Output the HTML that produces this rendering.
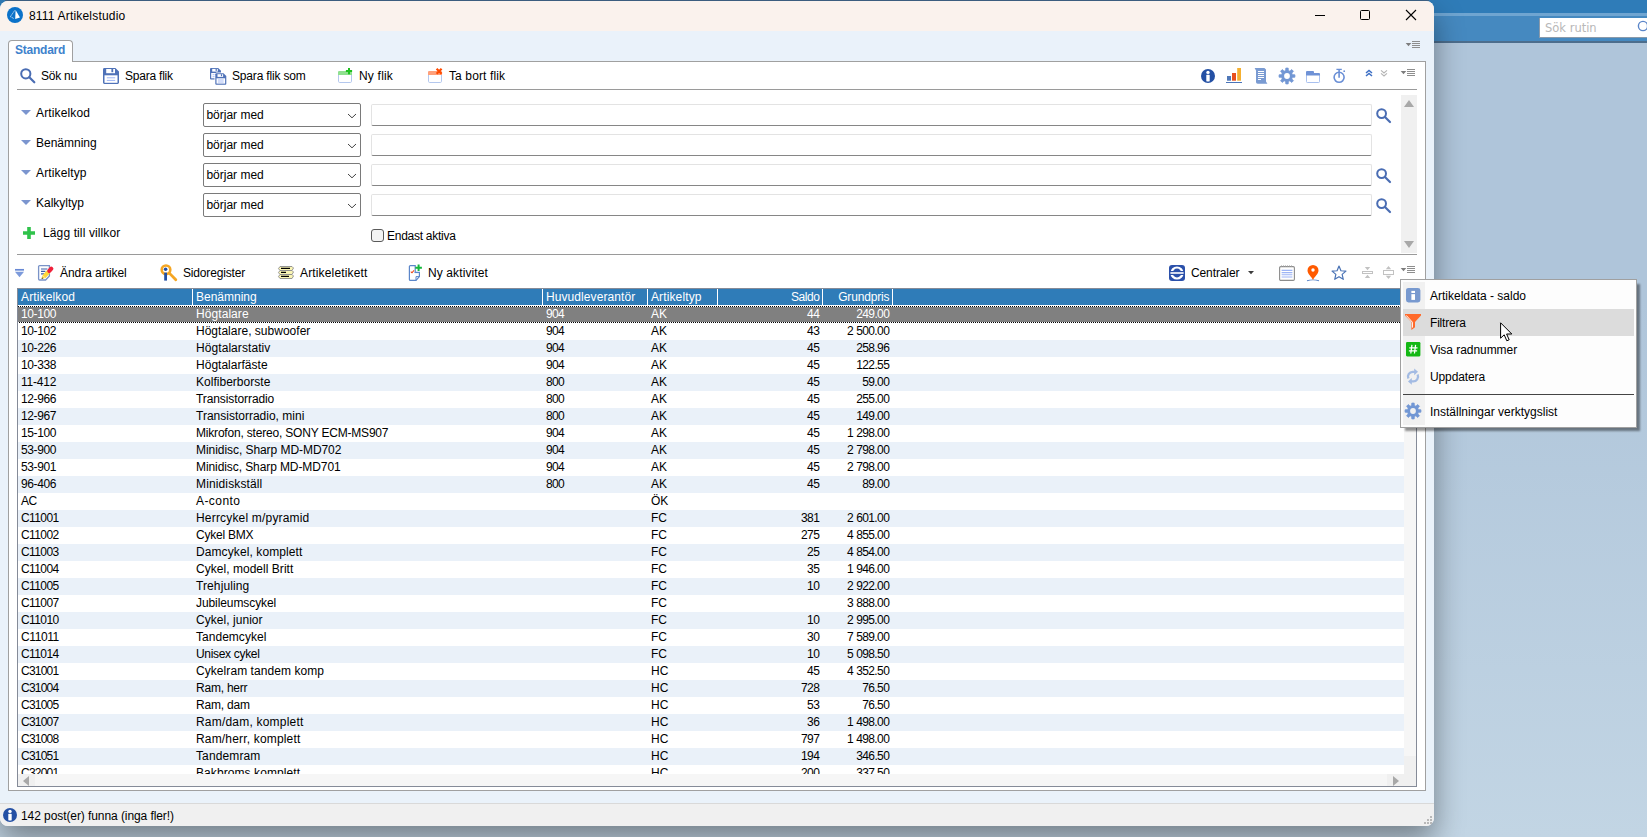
<!DOCTYPE html>
<html lang="sv"><head><meta charset="utf-8"><title>8111 Artikelstudio</title>
<style>
*{box-sizing:border-box}
html,body{margin:0;padding:0}
body{width:1647px;height:837px;overflow:hidden;position:relative;font-family:"Liberation Sans",sans-serif;font-size:12px;color:#000;
 background:linear-gradient(#afc5da 0,#afc5da 300px,#c2d5e4 837px)}
.abs{position:absolute}
svg{position:absolute;overflow:visible}
#topband{left:0;top:0;width:1647px;height:43px;background:linear-gradient(#2f7cb8 0,#2f7cb8 13px,#6fa5d1 13px,#6fa5d1 16px,#4589c0 16px,#4589c0 41px,#4c6d8c 41px,#4c6d8c 43px)}
#search{left:1539px;top:18px;width:120px;height:20px;background:#fff;border-left:1px solid #8a9aaa;border-bottom:1px solid #8a9aaa;color:#b8b8b8;font-family:"DejaVu Sans","Liberation Sans",sans-serif;font-size:11.5px;line-height:20px;padding-left:5px}
#shadow{left:0;top:0;width:1460px;height:837px;background:linear-gradient(90deg,rgba(60,80,100,.35) 1434px,rgba(60,80,100,0) 1458px)}
#shadowb{left:0;top:826px;width:1647px;height:11px;background:linear-gradient(rgba(70,85,100,.45),rgba(70,85,100,.25))}
#win{left:0;top:1px;width:1434px;height:825px;background:#eaf2fa;border-radius:8px;overflow:hidden;box-shadow:0 14px 30px rgba(0,0,0,.40)}
#title{left:0;top:0;width:1434px;height:30px;background:#faf2ed}
#title .t{left:29px;top:7px;font-size:12px;line-height:16px}
#tab{left:8px;top:39px;width:65px;height:22px;background:#fff;border:1px solid #a0a0a0;border-bottom:none;border-radius:4px 4px 0 0;color:#3e82cc;font-weight:bold;font-size:12px;line-height:19px;padding-left:6px;z-index:2;letter-spacing:-.24px}
#panel{left:8px;top:60px;width:1418px;height:730px;background:#fff;border:1px solid #a0a0a0}
.hl{background:#9a9a9a;height:1px}
.tb{font-size:12px;line-height:16px;white-space:nowrap}
.lbl{font-size:12px;line-height:16px;white-space:nowrap}
.combo{width:158px;height:24px;border:1px solid #7a7a7a;background:#fff;border-radius:2px;font-size:12px;line-height:22px;padding-left:2.400px}
.inp{left:371px;width:1001px;height:22px;background:#fff;border:1px solid #e3e3e3;border-bottom:1px solid #868686;border-radius:2px}
#grid{left:17px;top:288px;width:1400px;height:499px;border:1px solid #858b98;background:#fff;overflow:hidden}
#gh{left:0;top:0;width:1398px;height:16px;background:#2f7cb8;color:#fff}
#gh span{position:absolute;top:0;line-height:16px;font-size:12px}
#gh i{position:absolute;top:0;width:1px;height:16px;background:#fff}
.r{position:absolute;left:0;width:1386px;height:17px;line-height:17px;font-size:12px;white-space:nowrap}
.r.alt{background:#eaf1f9}
.r.sel{color:#fff;background:linear-gradient(#808080,#808080) 0 1px/100% 15px no-repeat,repeating-linear-gradient(90deg,#000 0,#000 1px,#fff 1px,#fff 2px) 0 0/100% 1px no-repeat,repeating-linear-gradient(90deg,#fff 0,#fff 1px,#000 1px,#000 2px) 0 16px/100% 1px no-repeat}
.r span{position:absolute;top:0}
.c1{left:3px}.c2{left:178px}.c3{left:528px;letter-spacing:-.62px}.c4{left:633px}.c5{right:584.800px;letter-spacing:-.62px}.c6{right:514.800px;letter-spacing:-.62px;word-spacing:.5px}
#status{left:0;top:803px;width:1434px;height:23px;background:#f0f0f0;border-top:1px solid #d9d9d9;border-radius:0 0 8px 8px}
#menu{left:1400px;top:279px;width:237px;height:149px;background:#fdfdfd;border:1px solid #a0a0a0;box-shadow:4px 4px 2px -1px rgba(0,0,0,.42)}
#menu .gut{left:2px;top:2px;width:22px;height:143px;background:#f1f1f1}
#menu .hov{left:2px;top:29px;width:231px;height:27px;background:#dcdcdc}
#menu .mi{left:29px;font-size:12px;line-height:16px;white-space:nowrap}
#menu .sep{left:2px;top:114px;width:231px;height:1px;background:#444}
</style></head><body>
<div id="topband" class="abs"></div>
<div id="search" class="abs">Sök rutin</div>
<div class="abs" style="left:5px;top:0;width:1424px;height:1px;background:#3f6488"></div>
<div id="win" class="abs">
 <div id="title" class="abs"><div class="t abs" style="letter-spacing:.19px">8111 Artikelstudio</div></div>
 <div id="tab" class="abs">Standard</div>
 <div id="panel" class="abs"></div>
</div>
<!-- content positioned in page coords -->
<div id="content" class="abs" style="left:0;top:0;width:1434px;height:837px">
 <div class="abs tb" style="left:41px;top:68px;letter-spacing:-0.25px">Sök nu</div>
 <div class="abs tb" style="left:125px;top:68px;letter-spacing:-0.22px">Spara flik</div>
 <div class="abs tb" style="left:232px;top:68px;letter-spacing:-0.18px">Spara flik som</div>
 <div class="abs tb" style="left:359px;top:68px;letter-spacing:0.2px">Ny flik</div>
 <div class="abs tb" style="left:449px;top:68px;letter-spacing:0.12px">Ta bort flik</div>
 <div class="abs hl" style="left:17px;top:89px;width:1400px"></div>

 <div class="abs lbl" style="left:36px;top:105px;letter-spacing:0.13px">Artikelkod</div>
 <div class="abs lbl" style="left:36px;top:135px">Benämning</div>
 <div class="abs lbl" style="left:36px;top:165px;letter-spacing:0.13px">Artikeltyp</div>
 <div class="abs lbl" style="left:36px;top:195px">Kalkyltyp</div>
 <div class="abs lbl" style="left:43px;top:225px;letter-spacing:0.12px">Lägg till villkor</div>
 <div class="abs combo" style="left:203px;top:103px">börjar med</div>
 <div class="abs combo" style="left:203px;top:133px">börjar med</div>
 <div class="abs combo" style="left:203px;top:163px">börjar med</div>
 <div class="abs combo" style="left:203px;top:193px">börjar med</div>
 <div class="abs inp" style="top:104px"></div>
 <div class="abs inp" style="top:134px"></div>
 <div class="abs inp" style="top:164px"></div>
 <div class="abs inp" style="top:194px"></div>
 <div class="abs" style="left:371px;top:229px;width:13px;height:13px;border:1px solid #5a5a5a;border-radius:3px;background:#f4f4f4"></div>
 <div class="abs lbl" style="left:387px;top:228px;letter-spacing:-0.26px">Endast aktiva</div>
 <div class="abs" style="left:1401px;top:95px;width:16px;height:158px;background:#f0f0f0"></div>
 <div class="abs hl" style="left:17px;top:254px;width:1400px"></div>

 <div class="abs tb" style="left:60px;top:265px;letter-spacing:-0.05px">Ändra artikel</div>
 <div class="abs tb" style="left:183px;top:265px;letter-spacing:-0.17px">Sidoregister</div>
 <div class="abs tb" style="left:300px;top:265px;letter-spacing:0.15px">Artikeletikett</div>
 <div class="abs tb" style="left:428px;top:265px;letter-spacing:0.11px">Ny aktivitet</div>
 <div class="abs tb" style="left:1191px;top:265px;letter-spacing:-0.11px">Centraler</div>

 <div id="grid" class="abs">
  <div id="gh" class="abs"><span style="left:3px;letter-spacing:.13px">Artikelkod</span><i style="left:174px"></i><span style="left:178px">Benämning</span><i style="left:524px"></i><span style="left:528px;letter-spacing:.08px">Huvudleverantör</span><i style="left:629px"></i><span style="left:633px;letter-spacing:.12px">Artikeltyp</span><i style="left:699px"></i><span style="right:596.600px;letter-spacing:-.45px">Saldo</span><i style="left:804px"></i><span style="right:526.600px;letter-spacing:-.16px">Grundpris</span><i style="left:874px"></i></div>
  <div class="abs" style="left:0;top:0;width:1398px;height:485px;overflow:hidden">
<div class="r sel" style="top:17px"><span class="c1" style="letter-spacing:-0.372px">10-100</span><span class="c2" style="letter-spacing:0.071px">Högtalare</span><span class="c3">904</span><span class="c4">AK</span><span class="c5">44</span><span class="c6">249.00</span></div>
<div class="r" style="top:34px"><span class="c1" style="letter-spacing:-0.372px">10-102</span><span class="c2" style="letter-spacing:0.013px">Högtalare, subwoofer</span><span class="c3">904</span><span class="c4">AK</span><span class="c5">43</span><span class="c6">2 500.00</span></div>
<div class="r alt" style="top:51px"><span class="c1" style="letter-spacing:-0.372px">10-226</span><span class="c2" style="letter-spacing:0.072px">Högtalarstativ</span><span class="c3">904</span><span class="c4">AK</span><span class="c5">45</span><span class="c6">258.96</span></div>
<div class="r" style="top:68px"><span class="c1" style="letter-spacing:-0.372px">10-338</span><span class="c2" style="letter-spacing:0.02px">Högtalarfäste</span><span class="c3">904</span><span class="c4">AK</span><span class="c5">45</span><span class="c6">122.55</span></div>
<div class="r alt" style="top:85px"><span class="c1" style="letter-spacing:-0.194px">11-412</span><span class="c2" style="letter-spacing:0.021px">Kolfiberborste</span><span class="c3">800</span><span class="c4">AK</span><span class="c5">45</span><span class="c6">59.00</span></div>
<div class="r" style="top:102px"><span class="c1" style="letter-spacing:-0.372px">12-966</span><span class="c2" style="letter-spacing:-0.092px">Transistorradio</span><span class="c3">800</span><span class="c4">AK</span><span class="c5">45</span><span class="c6">255.00</span></div>
<div class="r alt" style="top:119px"><span class="c1" style="letter-spacing:-0.372px">12-967</span><span class="c2" style="letter-spacing:0.002px">Transistorradio, mini</span><span class="c3">800</span><span class="c4">AK</span><span class="c5">45</span><span class="c6">149.00</span></div>
<div class="r" style="top:136px"><span class="c1" style="letter-spacing:-0.372px">15-100</span><span class="c2" style="letter-spacing:-0.193px">Mikrofon, stereo, SONY ECM-MS907</span><span class="c3">904</span><span class="c4">AK</span><span class="c5">45</span><span class="c6">1 298.00</span></div>
<div class="r alt" style="top:153px"><span class="c1" style="letter-spacing:-0.372px">53-900</span><span class="c2" style="letter-spacing:-0.057px">Minidisc, Sharp MD-MD702</span><span class="c3">904</span><span class="c4">AK</span><span class="c5">45</span><span class="c6">2 798.00</span></div>
<div class="r" style="top:170px"><span class="c1" style="letter-spacing:-0.372px">53-901</span><span class="c2" style="letter-spacing:-0.088px">Minidisc, Sharp MD-MD701</span><span class="c3">904</span><span class="c4">AK</span><span class="c5">45</span><span class="c6">2 798.00</span></div>
<div class="r alt" style="top:187px"><span class="c1" style="letter-spacing:-0.372px">96-406</span><span class="c2" style="letter-spacing:0.133px">Minidiskställ</span><span class="c3">800</span><span class="c4">AK</span><span class="c5">45</span><span class="c6">89.00</span></div>
<div class="r" style="top:204px"><span class="c1" style="letter-spacing:-0.572px">AC</span><span class="c2" style="letter-spacing:0.426px">A-conto</span><span class="c3"></span><span class="c4">ÖK</span><span class="c5"></span><span class="c6"></span></div>
<div class="r alt" style="top:221px"><span class="c1" style="letter-spacing:-0.588px">C11001</span><span class="c2" style="letter-spacing:0.182px">Herrcykel m/pyramid</span><span class="c3"></span><span class="c4">FC</span><span class="c5">381</span><span class="c6">2 601.00</span></div>
<div class="r" style="top:238px"><span class="c1" style="letter-spacing:-0.588px">C11002</span><span class="c2" style="letter-spacing:-0.218px">Cykel BMX</span><span class="c3"></span><span class="c4">FC</span><span class="c5">275</span><span class="c6">4 855.00</span></div>
<div class="r alt" style="top:255px"><span class="c1" style="letter-spacing:-0.588px">C11003</span><span class="c2" style="letter-spacing:0.095px">Damcykel, komplett</span><span class="c3"></span><span class="c4">FC</span><span class="c5">25</span><span class="c6">4 854.00</span></div>
<div class="r" style="top:272px"><span class="c1" style="letter-spacing:-0.588px">C11004</span><span class="c2" style="letter-spacing:0.034px">Cykel, modell Britt</span><span class="c3"></span><span class="c4">FC</span><span class="c5">35</span><span class="c6">1 946.00</span></div>
<div class="r alt" style="top:289px"><span class="c1" style="letter-spacing:-0.588px">C11005</span><span class="c2" style="letter-spacing:0.104px">Trehjuling</span><span class="c3"></span><span class="c4">FC</span><span class="c5">10</span><span class="c6">2 922.00</span></div>
<div class="r" style="top:306px"><span class="c1" style="letter-spacing:-0.588px">C11007</span><span class="c2" style="letter-spacing:-0.083px">Jubileumscykel</span><span class="c3"></span><span class="c4">FC</span><span class="c5"></span><span class="c6">3 888.00</span></div>
<div class="r alt" style="top:323px"><span class="c1" style="letter-spacing:-0.588px">C11010</span><span class="c2" style="letter-spacing:0.047px">Cykel, junior</span><span class="c3"></span><span class="c4">FC</span><span class="c5">10</span><span class="c6">2 995.00</span></div>
<div class="r" style="top:340px"><span class="c1" style="letter-spacing:-0.41px">C11011</span><span class="c2" style="letter-spacing:0.027px">Tandemcykel</span><span class="c3"></span><span class="c4">FC</span><span class="c5">30</span><span class="c6">7 589.00</span></div>
<div class="r alt" style="top:357px"><span class="c1" style="letter-spacing:-0.588px">C11014</span><span class="c2" style="letter-spacing:-0.314px">Unisex cykel</span><span class="c3"></span><span class="c4">FC</span><span class="c5">10</span><span class="c6">5 098.50</span></div>
<div class="r" style="top:374px"><span class="c1" style="letter-spacing:-0.766px">C31001</span><span class="c2" style="letter-spacing:0.068px">Cykelram tandem komp</span><span class="c3"></span><span class="c4">HC</span><span class="c5">45</span><span class="c6">4 352.50</span></div>
<div class="r alt" style="top:391px"><span class="c1" style="letter-spacing:-0.766px">C31004</span><span class="c2" style="letter-spacing:-0.218px">Ram, herr</span><span class="c3"></span><span class="c4">HC</span><span class="c5">728</span><span class="c6">76.50</span></div>
<div class="r" style="top:408px"><span class="c1" style="letter-spacing:-0.766px">C31005</span><span class="c2" style="letter-spacing:-0.206px">Ram, dam</span><span class="c3"></span><span class="c4">HC</span><span class="c5">53</span><span class="c6">76.50</span></div>
<div class="r alt" style="top:425px"><span class="c1" style="letter-spacing:-0.766px">C31007</span><span class="c2" style="letter-spacing:0.205px">Ram/dam, komplett</span><span class="c3"></span><span class="c4">HC</span><span class="c5">36</span><span class="c6">1 498.00</span></div>
<div class="r" style="top:442px"><span class="c1" style="letter-spacing:-0.766px">C31008</span><span class="c2" style="letter-spacing:0.173px">Ram/herr, komplett</span><span class="c3"></span><span class="c4">HC</span><span class="c5">797</span><span class="c6">1 498.00</span></div>
<div class="r alt" style="top:459px"><span class="c1" style="letter-spacing:-0.766px">C31051</span><span class="c2" style="letter-spacing:0.118px">Tandemram</span><span class="c3"></span><span class="c4">HC</span><span class="c5">194</span><span class="c6">346.50</span></div>
<div class="r" style="top:476px"><span class="c1" style="letter-spacing:-0.766px">C32001</span><span class="c2" style="letter-spacing:0.082px">Bakbroms komplett</span><span class="c3"></span><span class="c4">HC</span><span class="c5">200</span><span class="c6">337.50</span></div>
  </div>
  <div class="abs" style="left:1386px;top:17px;width:12px;height:468px;background:#f6f6f6"></div><div class="abs" style="left:1386px;top:467px;width:12px;height:18px;background:#f0f0f0"></div>
  <div class="abs" style="left:0;top:485px;width:1398px;height:12px;background:#f6f6f6"></div><div class="abs" style="left:1369px;top:485px;width:17px;height:12px;background:#f0f0f0"></div><div class="abs" style="left:0;top:485px;width:17px;height:12px;background:#f0f0f0"></div><div class="abs" style="left:1386px;top:485px;width:12px;height:12px;background:#f0f0f0"></div>
 </div>

 <div id="status" class="abs"><div class="abs lbl" style="left:21px;top:4px;letter-spacing:-0.08px">142 post(er) funna (inga fler!)</div></div>
</div>


<!-- ICONS -->
<svg style="left:7px;top:7px" width="16" height="16" viewBox="0 0 16 16"><circle cx="8" cy="8" r="8" fill="#0b72c9"/><path d="M8.6 3 L13 10.6 L8.2 12 Z" fill="#fff"/><path d="M7.6 3.6 L3.4 9.6 L6.6 11.4" fill="none" stroke="#fff" stroke-width="1" stroke-dasharray="1.2 1.2"/></svg>
<!-- window controls -->
<svg style="left:1314px;top:9px" width="12" height="12" viewBox="0 0 12 12"><path d="M1 6.5H11" stroke="#000" stroke-width="1"/></svg>
<svg style="left:1359px;top:9px" width="12" height="12" viewBox="0 0 12 12"><rect x="1.5" y="1.5" width="9" height="9" rx="1" fill="none" stroke="#000" stroke-width="1"/></svg>
<svg style="left:1405px;top:9px" width="12" height="12" viewBox="0 0 12 12"><path d="M1 1L11 11M11 1L1 11" stroke="#000" stroke-width="1.1"/></svg>
<!-- menu glyphs -->
<svg class="mg" style="left:1406px;top:41px" width="14" height="8" viewBox="0 0 14 8"><path d="M-.3 2h5.600L2.500 5.200z" fill="#7d7d7d"/><path d="M6 .5h8M6 2.500h8M6 4.500h8M6 6.500h8" stroke="#8e8e8e" stroke-width="1"/></svg>
<svg class="mg" style="left:1401px;top:69px" width="14" height="8" viewBox="0 0 14 8"><path d="M-.3 2h5.600L2.500 5.200z" fill="#7d7d7d"/><path d="M6 .5h8M6 2.500h8M6 4.500h8M6 6.500h8" stroke="#8e8e8e" stroke-width="1"/></svg>
<svg class="mg" style="left:1401px;top:266px" width="14" height="8" viewBox="0 0 14 8"><path d="M-.3 2h5.600L2.500 5.200z" fill="#7d7d7d"/><path d="M6 .5h8M6 2.500h8M6 4.500h8M6 6.500h8" stroke="#8e8e8e" stroke-width="1"/></svg>
<!-- toolbar 1 left -->
<svg style="left:19px;top:67px" width="17" height="17" viewBox="0 0 17 17"><circle cx="6.8" cy="6.8" r="4.6" fill="none" stroke="#4a6db3" stroke-width="2"/><path d="M10.3 10.3L15.3 15.3" stroke="#4a6db3" stroke-width="2.2" stroke-linecap="round"/></svg>
<svg style="left:103px;top:68px" width="16" height="16" viewBox="0 0 16 16"><path d="M1.400 0H12.400L16 3.600V14.600a1.400 1.400 0 0 1-1.400 1.400H1.400A1.400 1.400 0 0 1 0 14.600V1.400A1.400 1.400 0 0 1 1.400 0z" fill="#4f72b8"/><rect x="3.200" y="1" width="8.800" height="4.200" fill="#fff"/><rect x="8.400" y="1" width="1.800" height="3.200" fill="#4f72b8"/><rect x="1.500" y="7.300" width="13" height="7.500" fill="#fff"/><path d="M3.800 9.800h8.400M3.800 12.400h8.400" stroke="#9db4f5" stroke-width="1"/></svg>
<svg style="left:210px;top:68px" width="17" height="17" viewBox="0 0 17 17"><g><path d="M1 0H8.200L11 2.800V10.400a1 1 0 0 1-1 1H1a1 1 0 0 1-1-1V1a1 1 0 0 1 1-1z" fill="#4f72b8"/><rect x="2.200" y=".9" width="5.600" height="2.700" fill="#fff"/><rect x="5.600" y=".9" width="1.200" height="2" fill="#4f72b8"/><rect x="1.200" y="5" width="8.600" height="5.300" fill="#fff"/><path d="M2.600 6.700h5.800M2.600 8.700h5.800" stroke="#9db4f5" stroke-width=".9"/></g><g transform="translate(5.300 5.300)"><path d="M1 -.8H8.600L11.800 2.400V12.200H-.8V1z" fill="#fff"/><path d="M1 0H8.200L11 2.800V10.400a1 1 0 0 1-1 1H1a1 1 0 0 1-1-1V1a1 1 0 0 1 1-1z" fill="#4f72b8"/><rect x="2.200" y=".9" width="5.600" height="2.700" fill="#fff"/><rect x="5.600" y=".9" width="1.200" height="2" fill="#4f72b8"/><rect x="1.200" y="5" width="8.600" height="5.300" fill="#fff"/><path d="M2.600 6.700h5.800M2.600 8.700h5.800" stroke="#9db4f5" stroke-width=".9"/></g></svg>
<svg style="left:338px;top:68px" width="15" height="16" viewBox="0 0 15 16"><rect x=".5" y="3.500" width="13" height="11" rx="1.200" fill="#fff" stroke="#b4c8ee" stroke-width="1"/><path d="M0 7V4.200a1.200 1.200 0 0 1 1.200-1.200H12.800a1.200 1.200 0 0 1 1.200 1.200V7z" fill="#8fe08f"/><path d="M11 0v6.200M7.900 3.100h6.200" stroke="#1fc01f" stroke-width="2"/></svg>
<svg style="left:428px;top:68px" width="15" height="16" viewBox="0 0 15 16"><rect x=".5" y="3.500" width="13" height="11" rx="1.200" fill="#fff" stroke="#b4c8ee" stroke-width="1"/><path d="M0 7V4.200a1.200 1.200 0 0 1 1.200-1.200H12.800a1.200 1.200 0 0 1 1.200 1.200V7z" fill="#ffa07a"/><path d="M8.600 .8l5 5M13.600 .8l-5 5" stroke="#ff4a00" stroke-width="2.200"/></svg>
<!-- toolbar 1 right -->
<svg style="left:1201px;top:69px" width="14" height="14" viewBox="0 0 14 14"><circle cx="7" cy="7" r="7" fill="#2450a4"/><circle cx="7" cy="3.4" r="1.7" fill="#fff"/><rect x="5.3" y="5.8" width="3.4" height="6.6" rx=".6" fill="#fff"/></svg>
<svg style="left:1226px;top:67px" width="17" height="17" viewBox="0 0 17 17"><rect x="1" y="9" width="4" height="4.700" fill="#5078b8"/><rect x="6" y="6" width="4" height="7.700" fill="#e8501e"/><rect x="11.200" y="1" width="3.800" height="12.700" fill="#f5b030"/><path d="M0 15.500h16" stroke="#4a74b8" stroke-width="1"/></svg>
<svg style="left:1254px;top:67px" width="14" height="18" viewBox="0 0 14 18"><path d="M.6 1H10.400L12 2.600V14.400L13.400 16.800H3.800C2.600 16.800 2 16 2 14.800V3.400z" fill="#7a9bd2"/><path d="M4 4.500h6M4 6.500h6M4 8.500h6M4 10.500h6M4 12.500h3" stroke="#fff" stroke-width="1"/></svg>
<svg style="left:1279px;top:68px" width="16" height="16" viewBox="-8 -8 16 16"><path d="M-1.35 -5.43L-1.18 -7.91L1.18 -7.91L1.35 -5.43L2.89 -4.80L4.76 -6.43L6.43 -4.76L4.80 -2.89L5.43 -1.35L7.91 -1.18L7.91 1.18L5.43 1.35L4.80 2.89L6.43 4.76L4.76 6.43L2.89 4.80L1.35 5.43L1.18 7.91L-1.18 7.91L-1.35 5.43L-2.89 4.80L-4.76 6.43L-6.43 4.76L-4.80 2.89L-5.43 1.35L-7.91 1.18L-7.91 -1.18L-5.43 -1.35L-4.80 -2.89L-6.43 -4.76L-4.76 -6.43L-2.89 -4.80z" fill="#7297d4" stroke="#7297d4" stroke-width=".8" stroke-linejoin="round"/><circle r="2.900" fill="#fff"/></svg>
<svg style="left:1306px;top:71px" width="14" height="12" viewBox="0 0 14 12"><rect x=".5" y="3.500" width="13" height="8" rx=".8" fill="#fff" stroke="#a8c0ef" stroke-width="1"/><path d="M0 4.400V1a1 1 0 0 1 1-1H7a1 1 0 0 1 1 1V2H13a1 1 0 0 1 1 1V4.400z" fill="#6f92d6"/></svg>
<svg style="left:1331px;top:67px" width="16" height="17" viewBox="0 0 16 17"><circle cx="8.100" cy="10.300" r="5" fill="#fff" stroke="#6a8fd6" stroke-width="1.600"/><path d="M8.100 2.500v8.300" stroke="#6a8fd6" stroke-width="1.600"/><path d="M5.400 2.400h5.400" stroke="#6a8fd6" stroke-width="1.300"/><circle cx="13.200" cy="4.200" r=".9" fill="#6a8fd6"/></svg>
<svg style="left:1365px;top:69px" width="8" height="8" viewBox="0 0 8 8"><path d="M1 4L4 1.400L7 4M1 7L4 4.400L7 7" fill="none" stroke="#3d6fc4" stroke-width="1.500"/></svg>
<svg style="left:1380px;top:69px" width="8" height="8" viewBox="0 0 8 8"><path d="M1 1.400L4 4L7 1.400M1 4.400L4 7L7 4.400" fill="none" stroke="#b4b4b4" stroke-width="1.100"/></svg>

<svg style="left:21px;top:110px" width="10" height="5" viewBox="0 0 10 5"><path d="M0 0H10L5 5z" fill="#7b95cf"/></svg>
<svg style="left:21px;top:140px" width="10" height="5" viewBox="0 0 10 5"><path d="M0 0H10L5 5z" fill="#7b95cf"/></svg>
<svg style="left:21px;top:170px" width="10" height="5" viewBox="0 0 10 5"><path d="M0 0H10L5 5z" fill="#7b95cf"/></svg>
<svg style="left:21px;top:200px" width="10" height="5" viewBox="0 0 10 5"><path d="M0 0H10L5 5z" fill="#7b95cf"/></svg>
<svg style="left:1375px;top:107px" width="17" height="17" viewBox="0 0 17 17"><circle cx="6.6" cy="6.6" r="4.4" fill="none" stroke="#4a6db3" stroke-width="2"/><path d="M10 10L15 15" stroke="#4a6db3" stroke-width="2.2" stroke-linecap="round"/></svg>
<svg style="left:1375px;top:167px" width="17" height="17" viewBox="0 0 17 17"><circle cx="6.6" cy="6.6" r="4.4" fill="none" stroke="#4a6db3" stroke-width="2"/><path d="M10 10L15 15" stroke="#4a6db3" stroke-width="2.2" stroke-linecap="round"/></svg>
<svg style="left:1375px;top:197px" width="17" height="17" viewBox="0 0 17 17"><circle cx="6.6" cy="6.6" r="4.4" fill="none" stroke="#4a6db3" stroke-width="2"/><path d="M10 10L15 15" stroke="#4a6db3" stroke-width="2.2" stroke-linecap="round"/></svg>
<svg style="left:347px;top:113px" width="10" height="6" viewBox="0 0 10 6"><path d="M1 1L5 4.8L9 1" fill="none" stroke="#444" stroke-width="1"/></svg>
<svg style="left:347px;top:143px" width="10" height="6" viewBox="0 0 10 6"><path d="M1 1L5 4.8L9 1" fill="none" stroke="#444" stroke-width="1"/></svg>
<svg style="left:347px;top:173px" width="10" height="6" viewBox="0 0 10 6"><path d="M1 1L5 4.8L9 1" fill="none" stroke="#444" stroke-width="1"/></svg>
<svg style="left:347px;top:203px" width="10" height="6" viewBox="0 0 10 6"><path d="M1 1L5 4.8L9 1" fill="none" stroke="#444" stroke-width="1"/></svg>
<svg style="left:23px;top:227px" width="12" height="12" viewBox="0 0 12 12"><path d="M6 0v12M0 6h12" stroke="#2fc24a" stroke-width="3.6"/></svg>
<!-- cond scrollbar arrows -->
<svg style="left:1404px;top:100px" width="10" height="7" viewBox="0 0 10 7"><path d="M0 7H10L5 0z" fill="#a8a8a8"/></svg>
<svg style="left:1404px;top:241px" width="10" height="7" viewBox="0 0 10 7"><path d="M0 0H10L5 7z" fill="#a8a8a8"/></svg>
<!-- toolbar 2 -->
<svg style="left:15px;top:269px" width="9" height="8" viewBox="0 0 9 8"><path d="M0 .8h9" stroke="#6788d4" stroke-width="1.700"/><path d="M0 2.800H9L4.500 8.200z" fill="#7c9adb"/></svg>
<svg style="left:37px;top:264px" width="18" height="18" viewBox="0 0 18 18"><path d="M2.600 1.600H12.400V12L8.600 16H2.600a1 1 0 0 1-1-1V2.600a1 1 0 0 1 1-1z" fill="#fff" stroke="#7a93c8" stroke-width="1.300"/><path d="M4 5h6.400M4 7.400h4.400M4 9.800h3.200" stroke="#3f5fa8" stroke-width="1.200"/><path d="M7 12.600L11.800 7.400" stroke="#ffd83a" stroke-width="4.200"/><path d="M12.300 6.900L14.300 4.700" stroke="#f0203a" stroke-width="4.200" stroke-linecap="round"/><path d="M4.600 15L5.400 11.600L8.200 14z" fill="#ffd83a"/><path d="M4.600 15L5 13.300L6.300 14.500z" fill="#444"/></svg>
<svg style="left:160px;top:264px" width="18" height="18" viewBox="0 0 18 18"><circle cx="6" cy="5.800" r="4.300" fill="#fff" stroke="#f5a623" stroke-width="2.600"/><path d="M9.800 9.600L15.800 15.800" stroke="#f5a623" stroke-width="2.800" stroke-linecap="round"/><circle cx="5.600" cy="5.300" r="1.800" fill="#2450a4"/><rect x="4.200" y="8.600" width="2.800" height="8" fill="#2450a4"/></svg>
<svg style="left:278px;top:266px" width="16" height="13" viewBox="0 0 16 13"><g fill="#faf5b4" stroke="#8c8c8c" stroke-width=".9"><path d="M2 .5H14L15.500 2L14 4.500H2L.5 2.600z"/><path d="M2 4.500H14L15.500 6L14 8.500H2L.5 6.600z"/><path d="M2 8.500H14L15.500 10L14 12.500H2L.5 10.600z"/></g><path d="M3 2.400h9M3 6.400h5M3 10.400h8" stroke="#000" stroke-width="1.300"/></svg>
<svg style="left:408px;top:264px" width="15" height="18" viewBox="0 0 15 18"><path d="M2.4 1.6H7.2V8.4H11.4V12.6L8 16.4H2.4a1 1 0 0 1-1-1V2.6a1 1 0 0 1 1-1z" fill="#fff" stroke="#5b86c9" stroke-width="1.2"/><path d="M11.4 12.6H8V16.4" fill="none" stroke="#5b86c9" stroke-width="1"/><path d="M2.8 7.6L4 8.8L6 6.4" fill="none" stroke="#f0501e" stroke-width="1.1"/><path d="M6.8 8.6H10" stroke="#5b86c9" stroke-width="1"/><path d="M10.6 .4V7M7.3 3.7h6.6" stroke="#14b83c" stroke-width="2"/></svg>
<svg style="left:1169px;top:265px" width="16" height="16" viewBox="0 0 16 16"><rect width="16" height="16" rx="3" fill="#2b50aa"/><circle cx="8" cy="8" r="5.500" fill="none" stroke="#fff" stroke-width="2.200"/><rect x="1" y="6" width="14" height="4" fill="#2b50aa"/><rect x="1.400" y="7.200" width="13.200" height="1.600" fill="#fff"/></svg>
<svg style="left:1248px;top:271px" width="6" height="3" viewBox="0 0 6 3"><path d="M0 0H6L3 3.200z" fill="#3c3c3c"/></svg>
<svg style="left:1279px;top:265px" width="16" height="16" viewBox="0 0 16 16"><rect x=".6" y="1.6" width="14.8" height="13.8" rx="1.2" fill="#fff" stroke="#8c8c8c" stroke-width="1.1"/><path d="M2 1.2h12" stroke="#9a9a9a" stroke-width="1.6" stroke-dasharray="1 1"/><path d="M2.6 5.4h10.8M2.6 7.6h10.8M2.6 9.8h10.8M2.6 12h10.8" stroke="#9db4f5" stroke-width="1.1"/></svg>
<svg style="left:1306px;top:264px" width="14" height="18" viewBox="0 0 14 18"><path d="M1 16.800C4 15.800 10 15.800 13 16.800" fill="none" stroke="#5b86c9" stroke-width="1.100"/><path d="M7 16C5.600 12.400 1.500 10 1.500 6.400a5.500 5.500 0 0 1 11 0C12.500 10 8.400 12.400 7 16z" fill="#ff5a00"/><circle cx="7" cy="6" r="1.700" fill="#fff"/></svg>
<svg style="left:1331px;top:265px" width="16" height="16" viewBox="0 0 16 16"><path d="M8.00 1.10L9.94 5.73L14.94 6.14L11.14 9.42L12.29 14.31L8.00 11.70L3.71 14.31L4.86 9.42L1.06 6.14L6.06 5.73z" fill="#fff" stroke="#4a73b5" stroke-width="1.200" stroke-linejoin="round"/></svg>
<svg style="left:1362px;top:266px" width="11" height="13" viewBox="0 0 11 13"><path d="M2.800 1H8.200L5.500 4.200zM2.800 12H8.200L5.500 8.800z" fill="#c2c2c2"/><rect x=".5" y="5.500" width="10" height="2" fill="#fff" stroke="#c2c2c2" stroke-width="1"/></svg>
<svg style="left:1383px;top:266px" width="11" height="14" viewBox="0 0 11 14"><path d="M2.800 3.200H8.200L5.500 0zM2.800 9.800H8.200L5.500 13z" fill="#c2c2c2"/><rect x=".5" y="4.500" width="10" height="4" fill="#fff" stroke="#c2c2c2" stroke-width="1"/></svg>
<!-- grid scroll arrows -->
<svg style="left:23px;top:776px" width="6" height="10" viewBox="0 0 6 10"><path d="M6 0V10L0 5z" fill="#a8a8a8"/></svg>
<svg style="left:1393px;top:776px" width="6" height="10" viewBox="0 0 6 10"><path d="M0 0V10L6 5z" fill="#a8a8a8"/></svg>
<!-- status -->
<svg style="left:3px;top:808px" width="14" height="14" viewBox="0 0 14 14"><circle cx="7" cy="7" r="7" fill="#2450a4"/><circle cx="7" cy="3.400" r="1.700" fill="#fff"/><rect x="5.300" y="5.800" width="3.400" height="6.600" rx=".6" fill="#fff"/></svg>
<svg style="left:1424px;top:816px" width="9" height="9" viewBox="0 0 9 9"><g fill="#b8b8b8"><rect x="6" y="0" width="2" height="2"/><rect x="3" y="3" width="2" height="2"/><rect x="6" y="3" width="2" height="2"/><rect x="0" y="6" width="2" height="2"/><rect x="3" y="6" width="2" height="2"/><rect x="6" y="6" width="2" height="2"/></g></svg>
<!-- search in top -->
<svg style="left:1636px;top:20px" width="14" height="14" viewBox="0 0 14 14"><circle cx="7" cy="6" r="4.600" fill="none" stroke="#5b86c9" stroke-width="1.400"/></svg>

<div id="menu" class="abs">
 <div class="gut abs"></div>
 <div class="hov abs"></div>
 <div class="mi abs" style="top:8px">Artikeldata - saldo</div>
 <div class="mi abs" style="top:35px;letter-spacing:-0.2px">Filtrera</div>
 <div class="mi abs" style="top:62px;letter-spacing:-0.05px">Visa radnummer</div>
 <div class="mi abs" style="top:89px;letter-spacing:-0.11px">Uppdatera</div>
 <div class="sep abs"></div>
 <svg style="left:5px;top:8px" width="14.4" height="14.4" viewBox="0 0 15 15"><rect width="15" height="15" rx="2.600" fill="#7899cf"/><rect x="5.600" y="3" width="3.800" height="2.200" fill="#fff"/><rect x="5.600" y="6.400" width="3.800" height="6" fill="#fff"/></svg>
 <svg style="left:4px;top:34px" width="16" height="16" viewBox="0 0 16 16"><path d="M0 0H16V1.400L10 8V13.200L6.400 16V8L0 1.400z" fill="#ff6a2b"/><path d="M1.200 1.400L7.400 8.200V13.600" fill="none" stroke="#fff" stroke-width="1"/></svg>
 <svg style="left:5px;top:62px" width="14.4" height="14.4" viewBox="0 0 15 15"><rect width="15" height="15" rx="1.200" fill="#14b814"/><path d="M6.200 3L5 12M10 3L8.800 12M3.400 6h8.600M3 9.200h8.600" stroke="#fff" stroke-width="1.300"/></svg>
 <svg style="left:5px;top:88px" width="14" height="17" viewBox="0 0 14 17"><path d="M2.400 10.600A4.800 4.800 0 0 1 7 3.800h2" fill="none" stroke="#a3bbe3" stroke-width="2.300"/><path d="M8.200 .4L12 3.800L8.200 7.200z" fill="#a3bbe3"/><path d="M11.600 6.600A4.800 4.800 0 0 1 7 13.400H5" fill="none" stroke="#a3bbe3" stroke-width="2.300"/><path d="M5.800 10L2 13.400L5.800 16.800z" fill="#a3bbe3"/></svg>
 <svg style="left:4px;top:123px" width="16" height="16" viewBox="-8 -8 16 16"><path d="M-1.35 -5.43L-1.18 -7.91L1.18 -7.91L1.35 -5.43L2.89 -4.80L4.76 -6.43L6.43 -4.76L4.80 -2.89L5.43 -1.35L7.91 -1.18L7.91 1.18L5.43 1.35L4.80 2.89L6.43 4.76L4.76 6.43L2.89 4.80L1.35 5.43L1.18 7.91L-1.18 7.91L-1.35 5.43L-2.89 4.80L-4.76 6.43L-6.43 4.76L-4.80 2.89L-5.43 1.35L-7.91 1.18L-7.91 -1.18L-5.43 -1.35L-4.80 -2.89L-6.43 -4.76L-4.76 -6.43L-2.89 -4.80z" fill="#7297d4" stroke="#7297d4" stroke-width=".8" stroke-linejoin="round"/><circle r="2.900" fill="#f1f1f1"/></svg>

 <div class="mi abs" style="top:124px">Inställningar verktygslist</div>
</div>

<svg style="left:1500px;top:322px;z-index:10" width="13" height="20" viewBox="0 0 13 20"><path d="M.6 .8V16.200L4.200 12.800L6.800 18.800L9.200 17.800L6.600 12H11.800z" fill="#fff" stroke="#000" stroke-width="1"/></svg>
</body></html>
